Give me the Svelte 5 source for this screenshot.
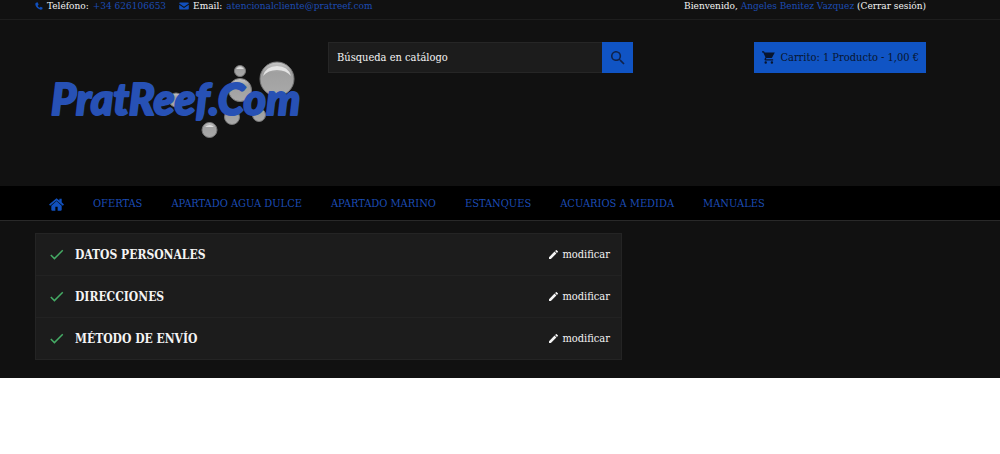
<script>
  const links = [
    'Ofertas',
    'Apartado agua dulce',
    'Apartado marino',
    'Estanques',
    'Acuarios a medida',
    'Manuales'
  ];
  const steps = ['Datos personales', 'Direcciones', 'Método de envío'];
</script>

<div class="page">
  <div class="topbar wrap">
    <div class="contact">
      <span class="item">
        <svg class="phone" viewBox="0 0 24 24" aria-hidden="true"><path d="M3 2 8 1l3 7-3 3c1 3 3 5 6 6l3-3 6 3-1 5c-1 1-3 1-5 1C8 21 1 13 1 6c0-2 1-3 2-4z" /></svg>
        Teléfono: <a href="tel:+34626106653">+34 626106653</a>
      </span>
      <span class="item">
        <svg class="mail" viewBox="0 0 24 20" aria-hidden="true"><path d="M2 1h20q2 0 2 3L12 12 0 4q0-3 2-3zM0 7l12 8 12-8v10q0 2-2 2H2q-2 0-2-2z" /></svg>
        Email: <a href="mailto:atencionalcliente@pratreef.com">atencionalcliente@pratreef.com</a>
      </span>
    </div>
    <div class="user">
      Bienvenido, <a href="#cuenta">Angeles Benitez Vazquez</a>
      <a class="plain" href="#salir">(Cerrar sesión)</a>
    </div>
  </div>

  <header class="wrap">
    <a class="logo" href="#inicio" aria-label="PratReef.Com">
      <svg viewBox="0 0 280 113" aria-hidden="true">
        <defs>
          <linearGradient id="bubble" x1="0" y1="0" x2="0" y2="1">
            <stop offset="0" stop-color="#c8c8c8" />
            <stop offset="0.3" stop-color="#a0a0a0" />
            <stop offset="1" stop-color="#a9a9a9" />
          </linearGradient>
        </defs>
        <g fill="url(#bubble)" stroke="#777">
          <circle cx="242" cy="37" r="17" />
          <circle cx="205" cy="29" r="5.5" />
          <circle cx="205" cy="48" r="11.5" />
          <circle cx="141" cy="58" r="7" />
          <circle cx="197" cy="75" r="7.5" />
          <circle cx="224" cy="73" r="6.5" />
          <circle cx="174.500" cy="88" r="7.500" />
        </g>
        <path d="M228 34q3-10 14-10t14 10q-5-6-14-6t-14 6z" fill="#e4e4e4" />
        <path d="M201 27q4-4 8 0zM170 85q5-4 9 0z" fill="#ddd" />
        <text x="16" y="73">PratReef.Com</text>
      </svg>
    </a>
    <form class="search" onsubmit={(e) => e.preventDefault()}>
      <input type="text" placeholder="Búsqueda en catálogo" aria-label="Búsqueda en catálogo" />
      <button aria-label="Buscar">
        <svg viewBox="3 3 18 18" aria-hidden="true"><path d="M15.500 14h-.79l-.28-.27A6.500 6.500 0 1 0 13.730 14.430l.27.28v.79l5 4.990L20.490 19zM9.500 14a4.500 4.500 0 1 1 0-9 4.500 4.500 0 0 1 0 9z" /></svg>
      </button>
    </form>
    <div class="cartcell">
      <a class="cart" href="#carrito">
        <svg viewBox="1 2 21 20" aria-hidden="true"><path d="M7 18a2 2 0 1 0 0 4 2 2 0 0 0 0-4zM1 2v2h2l3.600 7.590-1.350 2.450C4.520 15.370 5.480 17 7 17h12v-2H7.420l-.14-.25.900-1.750h7.450c.75 0 1.410-.41 1.750-1.030L21.700 4H5.210l-.94-2zM17 18a2 2 0 1 0 0 4 2 2 0 0 0 0-4z" /></svg>
        <span>Carrito: 1 Producto - 1,00 €</span>
      </a>
    </div>
  </header>

  <nav class="wrap">
    <a class="home" href="#inicio" aria-label="Inicio">
      <svg viewBox="0 0 26 22" aria-hidden="true"><path d="M13 5 4 13v7q0 2 2 2h5v-7h4v7h5q2 0 2-2v-7zM13 0 0 11l2 2L13 4l11 9 2-2-4-4V1h-4v3z" /></svg>
    </a>
    {#each links as link}
      <a href="#menu">{link}</a>
    {/each}
  </nav>

  <main class="wrap">
    <div class="steps">
      {#each steps as step}
        <section>
          <svg class="check" viewBox="3 5 19 14" aria-hidden="true"><path d="M9 16.200 4.800 12l-1.400 1.400L9 19 21 7l-1.400-1.400z" /></svg>
          <h1>{step}</h1>
          <a href="#editar">
            <svg viewBox="3 3 18 18" aria-hidden="true"><path d="M3 17.250V21h3.750L17.810 9.940l-3.750-3.750zM20.710 7.040a1 1 0 0 0 0-1.410l-2.340-2.340a1 1 0 0 0-1.410 0l-1.830 1.830 3.750 3.750z" /></svg>
            modificar
          </a>
        </section>
      {/each}
    </div>
  </main>
</div>

<style>
  :global(body) {
    margin: 0;
    background: #fff;
  }
  .page {
    background: #111;
    color: #f4f4f4;
    font: 11px/16px 'DejaVu Serif Condensed', 'DejaVu Serif', serif;
    overflow: hidden;
  }
  .wrap {
    display: flex;
    box-sizing: border-box;
    padding-left: 35px;
    padding-right: 74px;
  }
  a {
    color: #1c4cb4;
    text-decoration: none;
  }
  svg {
    fill: currentColor;
    flex: none;
  }
  .topbar {
    justify-content: space-between;
    height: 20px;
    padding-bottom: 7px;
    align-items: center;
    border-bottom: 1px solid #1e1e1e;
    font-size: 10px;
    white-space: nowrap;
  }
  .contact {
    display: flex;
    gap: 13px;
  }
  .item {
    display: flex;
    align-items: center;
    gap: 4px;
  }
  .phone {
    width: 8px;
    height: 8px;
    color: #1150bd;
  }
  .mail {
    width: 10px;
    height: 8px;
    color: #1150bd;
  }
  a.plain {
    color: #f4f4f4;
  }
  header {
    align-items: flex-start;
    padding-top: 22px;
    padding-bottom: 31px;
  }
  .logo {
    flex: 0 0 293px;
  }
  .logo svg {
    display: block;
    width: 280px;
    height: 113px;
  }
  .logo text {
    font: italic 900 43px Lato, sans-serif;
    fill: #2751b5;
    stroke: #2751b5;
    stroke-width: 2px;
    stroke-linejoin: round;
  }
  .search {
    display: flex;
    flex: 0 1 305px;
    min-width: 0;
  }
  .search input {
    flex: 1;
    min-width: 0;
    box-sizing: border-box;
    height: 31px;
    padding: 0 8px;
    border: 1px solid #262626;
    border-right: 0;
    border-radius: 0;
    background: #1c1c1c;
    color: #f4f4f4;
    font: inherit;
  }
  .search input::placeholder {
    color: #f4f4f4;
    opacity: 1;
  }
  .search button {
    display: grid;
    place-items: center;
    width: 31px;
    height: 31px;
    padding: 0;
    border: 0;
    background: #1054c4;
    color: #10224a;
  }
  .search button svg {
    width: 14px;
    height: 14px;
  }
  .cartcell {
    flex: 1;
    display: flex;
    justify-content: flex-end;
  }
  .cart {
    display: flex;
    align-items: center;
    gap: 5px;
    box-sizing: border-box;
    height: 31px;
    padding: 0 7px 0 8px;
    background: #1054c4;
    color: #08152e;
    white-space: nowrap;
  }
  .cart svg {
    width: 13px;
    height: 13px;
  }
  nav {
    align-items: center;
    gap: 29px;
    height: 35px;
    padding-top: 2px;
    background: #000;
    border-bottom: 1px solid #292929;
    text-transform: uppercase;
    white-space: nowrap;
  }
  nav .home {
    margin-left: 14px;
    line-height: 0;
    color: #1150bd;
  }
  nav .home svg {
    width: 15px;
    height: 13px;
  }
  main {
    padding-top: 12px;
    padding-bottom: 18px;
  }
  .steps {
    flex: 0 1 587px;
    box-sizing: border-box;
    border: 1px solid #242424;
    background: #1c1c1c;
  }
  section {
    display: flex;
    align-items: center;
    height: 41px;
    padding: 0 11px 0 14px;
  }
  section + section {
    border-top: 1px solid #222;
  }
  .check {
    width: 14px;
    height: 11px;
    color: #45ab65;
  }
  h1 {
    flex: 1;
    margin: 0 0 0 11px;
    font-size: 12px;
    font-weight: bold;
    text-transform: uppercase;
  }
  section a {
    display: flex;
    align-items: center;
    gap: 4px;
    color: #f4f4f4;
  }
  section a svg {
    width: 9px;
    height: 9px;
  }
</style>
